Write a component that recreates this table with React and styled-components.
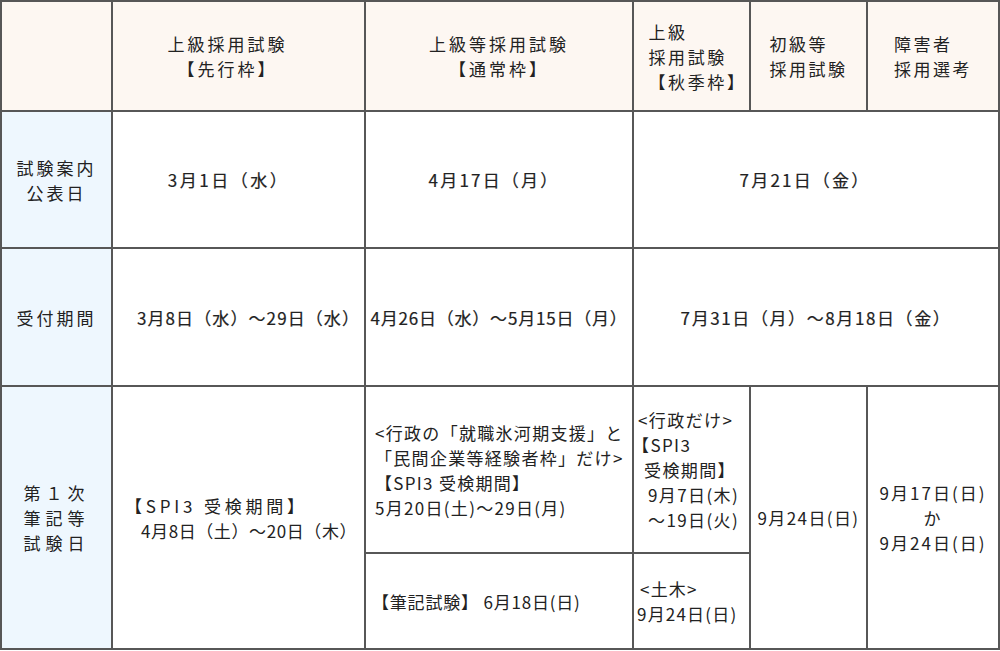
import React from "react";
import styled, { createGlobalStyle } from "styled-components";

const GlobalStyle = createGlobalStyle`
  html, body {
    margin: 0;
    padding: 0;
    background: #ffffff;
  }
  body {
    font-family: "Noto Sans CJK JP", "Noto Sans", sans-serif;
    color: #222222;
  }
`;

const Table = styled.div`
  width: 1000px;
  box-sizing: border-box;
  display: grid;
  grid-template-columns: 109px 251px 266px 115px 115px 130px;
  grid-template-rows: 108px 135px 136px 165px 94px;
  gap: 2px;
  padding: 2px;
  background: #575757;
`;

const tones = {
  head: "#fdf7f2",
  side: "#eef7fe",
  body: "#ffffff",
};

const Cell = styled.div`
  grid-column: ${(p) => p.$col};
  grid-row: ${(p) => p.$row};
  background: ${(p) => tones[p.$tone || "body"]};
  display: flex;
  flex-direction: column;
  justify-content: center;
  align-items: ${(p) => (p.$left ? "flex-start" : "center")};
  text-align: ${(p) => (p.$left ? "left" : "center")};
  padding: 0 ${(p) => p.$pr || 0}px 0 ${(p) => p.$pl || 0}px;
  font-size: 17px;
  line-height: 25px;
  font-weight: 400;
  -webkit-text-stroke: ${(p) => (p.$bold ? "0.2px #222" : "0")};
  letter-spacing: ${(p) => p.$ls ?? 1}px;
  white-space: nowrap;
`;

const Block = styled.div`
  display: flex;
  flex-direction: column;
  align-items: ${(p) => (p.$left ? "flex-start" : "center")};
`;

const Line = styled.span`
  display: block;
  margin-left: ${(p) => p.$indent || 0}px;
  ${(p) => (p.$ls != null ? `letter-spacing: ${p.$ls}px;` : "")}
`;

export default function App() {
  return (
    <>
      <GlobalStyle />
      <Table>
        <Cell $col="1" $row="1" $tone="head" />
        <Cell $col="2" $row="1" $tone="head" $ls={3} $pr={22}>
          <Line>上級採用試験</Line>
          <Line>【先行枠】</Line>
        </Cell>
        <Cell $col="3" $row="1" $tone="head" $ls={3}>
          <Line>上級等採用試験</Line>
          <Line>【通常枠】</Line>
        </Cell>
        <Cell $col="4" $row="1" $tone="head" $ls={2.6} $pl={12}>
          <Block $left>
            <Line>上級</Line>
            <Line>採用試験</Line>
            <Line>【秋季枠】</Line>
          </Block>
        </Cell>
        <Cell $col="5" $row="1" $tone="head" $ls={2.5}>
          <Block $left>
            <Line>初級等</Line>
            <Line>採用試験</Line>
          </Block>
        </Cell>
        <Cell $col="6" $row="1" $tone="head" $ls={2.5}>
          <Block $left>
            <Line>障害者</Line>
            <Line>採用選考</Line>
          </Block>
        </Cell>

        <Cell $col="1" $row="2" $tone="side" $ls={3}>
          <Line>試験案内</Line>
          <Line>公表日</Line>
        </Cell>
        <Cell $col="2" $row="2" $bold $ls={2.5} $pr={20}>
          3月1日（水）
        </Cell>
        <Cell $col="3" $row="2" $bold $ls={2.2} $pr={10}>
          4月17日（月）
        </Cell>
        <Cell $col="4 / 7" $row="2" $bold $ls={2.2} $pr={22}>
          7月21日（金）
        </Cell>

        <Cell $col="1" $row="3" $tone="side" $ls={3}>
          受付期間
        </Cell>
        <Cell $col="2" $row="3" $bold $ls={1.1} $pl={20}>
          3月8日（水）～29日（水）
        </Cell>
        <Cell $col="3" $row="3" $bold $ls={0.8}>
          4月26日（水）～5月15日（月）
        </Cell>
        <Cell $col="4 / 7" $row="3" $bold $ls={1.6}>
          7月31日（月）～8月18日（金）
        </Cell>

        <Cell $col="1" $row="4 / 6" $tone="side" $ls={5}>
          <Line>第１次</Line>
          <Line>筆記等</Line>
          <Line>試験日</Line>
        </Cell>
        <Cell $col="2" $row="4 / 6" $left $pl={12}>
          <Line $ls={3.8}>【SPI3 受検期間】</Line>
          <Line $ls={0.6} $indent={16}>
            4月8日（土）～20日（木）
          </Line>
        </Cell>
        <Cell $col="3" $row="4" $left $pl={9} $ls={1.3}>
          <Line>&lt;行政の「就職氷河期支援」と</Line>
          <Line>「民間企業等経験者枠」だけ&gt;</Line>
          <Line>【SPI3 受検期間】</Line>
          <Line>5月20日(土)～29日(月)</Line>
        </Cell>
        <Cell $col="3" $row="5" $left $pl={6} $ls={0.8}>
          【筆記試験】 6月18日(日)
        </Cell>
        <Cell $col="4" $row="4" $left $pl={4} $ls={1.4}>
          <Line>&lt;行政だけ&gt;</Line>
          <Line $indent={-6}>【SPI3</Line>
          <Line $indent={6}>受検期間】</Line>
          <Line $indent={10}>9月7日(木)</Line>
          <Line $indent={10}>～19日(火)</Line>
        </Cell>
        <Cell $col="4" $row="5" $left $pl={3} $ls={1.2}>
          <Line $indent={3}>&lt;土木&gt;</Line>
          <Line>9月24日(日)</Line>
        </Cell>
        <Cell $col="5" $row="4 / 6" $ls={1.4}>
          9月24日(日)
        </Cell>
        <Cell $col="6" $row="4 / 6" $ls={2}>
          <Line>9月17日(日)</Line>
          <Line>か</Line>
          <Line>9月24日(日)</Line>
        </Cell>
      </Table>
    </>
  );
}
